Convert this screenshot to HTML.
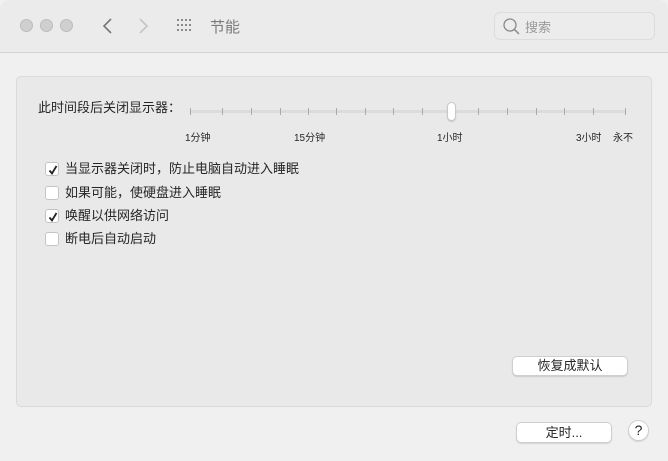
<!DOCTYPE html>
<html><head><meta charset="utf-8"><style>
*{margin:0;padding:0;box-sizing:border-box}
body{width:668px;height:461px;overflow:hidden;background:#f0f0f0;font-family:"Liberation Sans","Noto Sans CJK SC",sans-serif;color:#262626;position:relative}
.tb{position:absolute;left:0;top:0;width:668px;height:53px;background:#ebebeb;border-bottom:1px solid #d4d4d4;border-radius:10px 10px 0 0}
.dot{position:absolute;top:19px;width:13px;height:13px;border-radius:50%;background:#cfcfcf;border:1px solid #bdbdbd}
.t{position:absolute;white-space:nowrap}
.panel{position:absolute;left:16px;top:76px;width:636px;height:331px;background:#e9e9e9;border:1px solid #dadada;border-radius:5px}
.tick{position:absolute;top:108px;width:1px;height:7px;background:#aaa}
.cb{position:absolute;left:45px;width:14px;height:14px;background:#fff;border:1px solid #c4c4c4;border-radius:3px}
.cb svg{position:absolute;left:1px;top:1px}
.btn{position:absolute;background:#fff;border:1px solid #cfcfcf;border-radius:5px;box-shadow:0 1px 1px rgba(0,0,0,.12);font-size:13px;text-align:center}
</style></head><body>
<div class="tb"></div>
<div class="dot" style="left:20px"></div><div class="dot" style="left:40px"></div><div class="dot" style="left:60px"></div>
<svg style="position:absolute;left:100px;top:16px" width="60" height="20"><path d="M11 3 L4 10 L11 17" stroke="#777" stroke-width="1.6" fill="none"/><path d="M40 3 L47 10 L40 17" stroke="#c4c4c4" stroke-width="1.6" fill="none"/></svg>
<svg style="position:absolute;left:177px;top:19px" width="18" height="14" fill="#8a8a8a"><g>
<rect x="0" y="0" width="2" height="2"/><rect x="4" y="0" width="2" height="2"/><rect x="8" y="0" width="2" height="2"/><rect x="12" y="0" width="2" height="2"/>
<rect x="0" y="5" width="2" height="2"/><rect x="4" y="5" width="2" height="2"/><rect x="8" y="5" width="2" height="2"/><rect x="12" y="5" width="2" height="2"/>
<rect x="0" y="10" width="2" height="2"/><rect x="4" y="10" width="2" height="2"/><rect x="8" y="10" width="2" height="2"/><rect x="12" y="10" width="2" height="2"/></g></svg>
<div class="t" style="left:210px;top:16px;font-size:15px;color:#7a7a7a">节能</div>
<div style="position:absolute;left:494px;top:12px;width:161px;height:28px;border:1px solid #dcdcdc;border-radius:6px;background:#ececec"></div>
<svg style="position:absolute;left:502px;top:17px" width="20" height="20"><circle cx="8" cy="8" r="6" stroke="#8a8a8a" stroke-width="1.3" fill="none"/><path d="M12.5 12.5 L17 17" stroke="#8a8a8a" stroke-width="1.5"/></svg>
<div class="t" style="left:525px;top:17px;font-size:13px;color:#9a9a9a">搜索</div>
<div class="panel"></div>
<div class="t" style="left:38px;top:97px;font-size:13px">此时间段后关闭显示器：</div>
<div style="position:absolute;left:190px;top:110px;width:436px;height:3px;background:#dcdcdc;border-radius:2px"></div>
<div class="tick" style="left:190px"></div><div class="tick" style="left:222px"></div><div class="tick" style="left:251px"></div><div class="tick" style="left:280px"></div><div class="tick" style="left:308px"></div><div class="tick" style="left:336px"></div><div class="tick" style="left:365px"></div><div class="tick" style="left:393px"></div><div class="tick" style="left:422px"></div><div class="tick" style="left:478px"></div><div class="tick" style="left:507px"></div><div class="tick" style="left:536px"></div><div class="tick" style="left:564px"></div><div class="tick" style="left:593px"></div><div class="tick" style="left:625px"></div>
<div style="position:absolute;left:447px;top:102px;width:9px;height:19px;background:#fff;border:1px solid #c8c8c8;border-radius:5px;box-shadow:0 1px 1px rgba(0,0,0,.15)"></div>
<div class="t" style="left:185px;top:129px;font-size:10px">1分钟</div>
<div class="t" style="left:294px;top:129px;font-size:10px">15分钟</div>
<div class="t" style="left:437px;top:129px;font-size:10px">1小时</div>
<div class="t" style="left:576px;top:129px;font-size:10px">3小时</div>
<div class="t" style="left:613px;top:129px;font-size:10px">永不</div>
<div class="cb" style="top:162px"><svg width="12" height="12"><path d="M2.5 6.5 L5 9.5 L9.5 2" stroke="#222" stroke-width="1.8" fill="none"/></svg></div><div class="t" style="left:65px;top:158px;font-size:13px">当显示器关闭时，防止电脑自动进入睡眠</div>
<div class="cb" style="top:186px"></div><div class="t" style="left:65px;top:182px;font-size:13px">如果可能，使硬盘进入睡眠</div>
<div class="cb" style="top:209px"><svg width="12" height="12"><path d="M2.5 6.5 L5 9.5 L9.5 2" stroke="#222" stroke-width="1.8" fill="none"/></svg></div><div class="t" style="left:65px;top:205px;font-size:13px">唤醒以供网络访问</div>
<div class="cb" style="top:232px"></div><div class="t" style="left:65px;top:228px;font-size:13px">断电后自动启动</div>
<div class="btn" style="left:512px;top:356px;width:116px;height:20px;line-height:18px">恢复成默认</div>
<div class="btn" style="left:516px;top:422px;width:96px;height:21px;line-height:19px">定时...</div>
<div style="position:absolute;left:628px;top:420px;width:21px;height:21px;border-radius:50%;background:#fff;border:1px solid #cfcfcf;box-shadow:0 1px 1px rgba(0,0,0,.12);font-size:14px;text-align:center;line-height:19px">?</div>
</body></html>
